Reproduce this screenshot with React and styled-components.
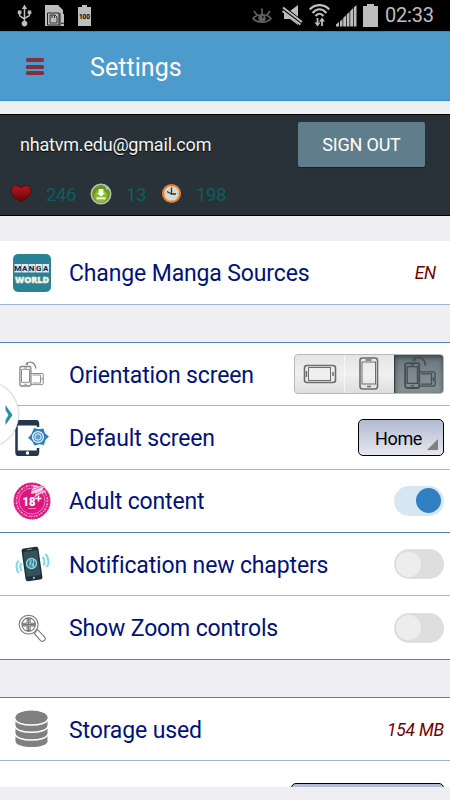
import { useState } from 'react';
import styled, { createGlobalStyle } from 'styled-components';

const GlobalStyle = createGlobalStyle`
  * {
    box-sizing: border-box;
  }

  body {
    margin: 0;
    background: #eeeef3;
    font-family: Roboto, sans-serif;
    overflow: hidden;
  }

  svg {
    display: block;
    flex-shrink: 0;
  }
`;

const Screen = styled.div`
  position: relative;
  width: 450px;
  height: 800px;
  overflow: hidden;
  background: #eeeef3;
`;

const StatusBar = styled.div`
  display: flex;
  align-items: center;
  justify-content: space-between;
  height: 31px;
  padding: 0 15px 0 17px;
  background: #000;
`;

const StatusGroup = styled.div`
  display: flex;
  align-items: center;
  gap: ${({ $gap }) => $gap}px;
`;

const Clock = styled.span`
  width: 51px;
  padding-left: 1px;
  font-size: 20px;
  line-height: 31px;
  letter-spacing: -0.2px;
  color: #bdbdbd;
  white-space: nowrap;
`;

const Header = styled.header`
  display: flex;
  align-items: center;
  height: 70px;
  padding-left: 26px;
  background: #4d9acd;
  border-top: 1px solid #3c87b8;
  border-bottom: 1px solid #2f92cd;
`;

const MenuButton = styled.button`
  display: flex;
  flex-direction: column;
  gap: 2.5px;
  width: 18px;
  padding: 1px 0 0;
  border: none;
  background: none;

  span {
    height: 4px;
    border-radius: 1.5px;
    background: #80313d;
  }
`;

const HeaderTitle = styled.h1`
  margin: 2px 0 0 46px;
  font-size: 25px;
  font-weight: 400;
  letter-spacing: 0.05px;
  color: #fff;
`;

const Account = styled.section`
  height: 102px;
  margin-top: 13px;
  border-top: 1px solid #000;
  border-bottom: 1px solid #000;
  background: #283238;
`;

const AccountTop = styled.div`
  display: flex;
  justify-content: space-between;
  align-items: center;
  height: 58px;
  padding: 0 25px 0 20px;
`;

const Email = styled.span`
  padding-top: 1px;
  font-size: 18px;
  letter-spacing: -0.2px;
  color: #f4f4f4;
  text-shadow: 0 1px 1px #000;
`;

const SignOutButton = styled.button`
  width: 127px;
  height: 45px;
  padding: 1px 0 0;
  border: none;
  border-radius: 2px;
  background: #607d8b;
  box-shadow: 0 1px 1px rgba(0, 0, 0, 0.4);
  font-family: inherit;
  font-size: 18px;
  letter-spacing: -0.2px;
  color: #fff;
`;

const Stats = styled.div`
  display: flex;
  align-items: center;
  height: 42px;
  padding: 0 0 1px 10px;
`;

const StatValue = styled.span`
  width: ${({ $width }) => $width}px;
  padding: 3px 0 0 14px;
  font-size: 18.5px;
  letter-spacing: -0.4px;
  color: #0b5f60;
`;

const Group = styled.section`
  margin-top: ${({ $gap }) => $gap}px;
  height: ${({ $height }) => $height}px;
  overflow: hidden;
  border-top: ${({ $topLine }) => ($topLine ? '1px solid #4b86ba' : 'none')};
  background: #fff;
`;

const Row = styled.div`
  display: flex;
  align-items: center;
  height: ${({ $height }) => $height || 63.35}px;
  padding-right: 6px;
  border-bottom: 1px solid ${({ $soft }) => ($soft ? '#9db5da' : '#4b86ba')};
`;

const IconCell = styled.div`
  display: flex;
  justify-content: center;
  width: 63px;
  flex-shrink: 0;
`;

const Label = styled.span`
  flex: 1;
  padding: 2px 0 0 6px;
  font-size: 23px;
  letter-spacing: -0.14px;
  color: #00137a;
  white-space: nowrap;
`;

const Value = styled.span`
  margin-right: ${({ $inset }) => $inset || 0}px;
  padding-top: 1px;
  font-size: 17.5px;
  font-style: italic;
  letter-spacing: -0.2px;
  color: #750000;
`;

const Segments = styled.div`
  display: flex;
  width: 150px;
  height: 40px;
  border: 1px solid #b9b9b9;
  border-radius: 4px;
  overflow: hidden;
  background: linear-gradient(#e4e4e4, #f0f0f0 50%, #dedede);
`;

const Segment = styled.button`
  display: flex;
  align-items: center;
  justify-content: center;
  width: 50px;
  padding: ${({ $active }) => ($active ? '0 0 3px 3px' : '0')};
  border: none;
  border-left: 1px solid ${({ $active }) => ($active ? '#313a3d' : 'rgba(255, 255, 255, 0.6)')};
  background: ${({ $active }) => ($active ? 'linear-gradient(#65737a, #7c888d 50%, #879195)' : 'none')};
  box-shadow: ${({ $active }) => ($active ? 'inset 0 2px 5px rgba(0, 0, 0, 0.45)' : 'none')};

  &:first-child {
    border-left: none;
  }
`;

const SelectBox = styled.button`
  position: relative;
  width: ${({ $width }) => $width}px;
  height: 37px;
  padding: 1px 5px 0 0;
  border: 1.5px solid #000;
  border-radius: 5px;
  background: linear-gradient(#b2bad1, #e6e8ef);
  font-family: inherit;
  font-size: 18px;
  letter-spacing: -0.3px;
  color: #000;

  &::after {
    content: '';
    position: absolute;
    right: 5px;
    bottom: 5px;
    border-left: 11px solid transparent;
    border-bottom: 11px solid #808080;
  }
`;

const PartialRow = styled.div`
  display: flex;
  justify-content: flex-end;
  padding: 22px 6px 0;
`;

const Track = styled.button`
  display: flex;
  align-items: center;
  justify-content: ${({ $on }) => ($on ? 'flex-end' : 'flex-start')};
  width: 50px;
  height: 30px;
  padding: 0 3px 0 2px;
  border: none;
  border-radius: 15px;
  background: ${({ $on }) => ($on ? '#d7e6f3' : '#dedede')};
`;

const Thumb = styled.span`
  width: 25px;
  height: 25px;
  border-radius: 50%;
  background: ${({ $on }) => ($on ? '#307fc3' : '#ededed')};
`;

const DrawerHandle = styled.button`
  position: absolute;
  left: -47px;
  top: 381px;
  display: flex;
  align-items: center;
  justify-content: flex-end;
  width: 66px;
  height: 67px;
  padding: 0 5px 0 0;
  border: 1px solid #dfdfdf;
  border-radius: 50%;
  background: #fff;
  box-shadow: 0 0 2px rgba(0, 0, 0, 0.15);
`;

const UsbIcon = () => (
  <svg width="15" height="23" viewBox="0 0 15 23" fill="none" stroke="#bdbdbd" strokeWidth="1.5">
    <path d="M7.5 3v16M2.5 8v3c0 2.5 5 2 5 5M12.5 8v3c0 2-5 2-5 4" />
    <path d="M7.5 0.5l2.6 4.5H4.9zM.8 6.5h3.6V10H.8zM10.7 6.5h3.6V10h-3.6z" fill="#bdbdbd" stroke="none" />
    <circle cx="7.5" cy="19.6" r="2.8" fill="#bdbdbd" stroke="none" />
  </svg>
);

const SdCardIcon = () => (
  <svg width="20" height="22" viewBox="0 0 20 22">
    <path d="M0 0h13l5 5v4h1v12H0z" fill="#bdbdbd" />
    <path d="M2.5 8h11.500v12H2.500z" fill="none" stroke="#222" strokeWidth="1" />
    <path d="M5 10h5l2 2v6H5z" fill="none" stroke="#333" strokeWidth="1" />
    <path d="M7 10v3M9.500 10v3" stroke="#333" fill="none" />
    <path d="M15 8v13" stroke="#222" />
    <path d="M16 18.3h3" stroke="#222" strokeWidth="1" />
  </svg>
);

const BatteryFull = () => (
  <svg width="13" height="21" viewBox="0 0 13 21">
    <path d="M4 0h5v2h4v19H0V2h4z" fill="#bdbdbd" />
    <text x="6.5" y="13.5" fontSize="6.5" fontWeight="700" fontFamily="Roboto, sans-serif" textAnchor="middle" fill="#000">100</text>
  </svg>
);

const EyeIcon = () => (
  <svg width="24" height="16" viewBox="0 0 24 16" fill="none" stroke="#606060" strokeWidth="1.7">
    <path d="M1 10.5C5 5.5 15 5.5 19 10.5 15 15.5 5 15.5 1 10.5z" />
    <path d="M10 .5V6M2 3l3 4M18 3l-3 4" />
    <circle cx="10" cy="10.2" r="3.7" fill="#606060" stroke="none" />
    <circle cx="10.8" cy="9" r="1" fill="#111" stroke="none" />
  </svg>
);

const MuteIcon = () => (
  <svg width="21" height="21" viewBox="0 0 21 21">
    <path d="M2 6h6l8-6v20l-8-6H2z" fill="#bdbdbd" />
    <path d="M1 3.500l18.500 14.500" stroke="#000" strokeWidth="5.500" />
    <path d="M1 2.500l19 14.500M.5 6l18 13.500" stroke="#bdbdbd" strokeWidth="2" />
  </svg>
);

const WifiIcon = () => (
  <svg width="21" height="23" viewBox="0 0 21 23" fill="none" stroke="#bdbdbd" strokeWidth="2.2">
    <path d="M.7 5.500C6-.4 15-.4 20.300 5.500M3.600 9C8 4 13 4 17.400 9M6.500 12C9 9 12 9 14.500 12" />
    <path d="M8.500 14v6M13 22v-6" strokeWidth="1.800" />
    <path d="M5.500 18.500h6l-3 4zM10 17.500h6l-3-4z" fill="#bdbdbd" stroke="none" />
  </svg>
);

const SignalIcon = () => (
  <svg width="21" height="22" viewBox="0 0 21 22" fill="#bdbdbd">
    <path d="M0 21.500V19.500l3-2.500v4.500zM4 21.500V16.500l2.500-2.500v7.500zM7.200 21.500V13L10 10.300v11.200zM10.700 21.500V9.500l2.800-2.800v14.800zM14.200 21.500V6L17 3.200v18.300zM17.700 21.500V2.600L20.500 0v21.500z" />
  </svg>
);

const BatteryIcon = () => (
  <svg width="15" height="23" viewBox="0 0 15 23" fill="#bdbdbd">
    <path d="M4 0h7v2h4v21H0V2h4z" />
  </svg>
);

const HeartIcon = () => (
  <svg width="22" height="20" viewBox="0 0 22 20">
    <defs>
      <linearGradient id="heart" x2="0" y2="1">
        <stop offset="0" stopColor="#b21820" />
        <stop offset="1" stopColor="#690004" />
      </linearGradient>
    </defs>
    <path d="M11 4C9 .5 1 .5 1 7c0 5 6 8 10 11 4-3 10-6 10-11C21 .5 13 .5 11 4z" fill="url(#heart)" stroke="#4f0509" strokeWidth="0.8" />
  </svg>
);

const DownloadBadge = () => (
  <svg width="22" height="22" viewBox="0 0 22 22">
    <circle cx="11" cy="11" r="9.700" fill="#67991b" stroke="#b7bdb3" strokeWidth="1.600" />
    <circle cx="11" cy="13" r="6.500" fill="#8bbe2c" />
    <path d="M12 1.200c4 0 8.500 3.800 8.700 8.500-1-2.500-2.500-3.500-4.700-3.500 0-2.500-1.500-4-4-5z" fill="#b7bdb3" />
    <path d="M8.700 6h4.600v4H15L11 13.800 7 10h1.700zM6.500 14.500h9v1.700h-9z" fill="#fff" />
  </svg>
);

const ClockBadge = () => (
  <svg width="21" height="21" viewBox="0 0 21 21">
    <circle cx="10.500" cy="10.500" r="8.500" fill="#d9d9d3" stroke="#ee7c22" strokeWidth="2.100" />
    <path d="M10.500 4.500v6.500H15M10.500 11L6 8.500" fill="none" stroke="#333" strokeWidth="1.300" />
    <path d="M10.500 3v1M10.500 17v1M3.500 10.500h1M16.500 10.500h1" stroke="#999" />
  </svg>
);

const LOGO_LETTERS = [
  ['M', '#d7e7f3'],
  ['A', '#f4dfe2'],
  ['N', '#d7e2f1'],
  ['G', '#f3e8ee'],
  ['A', '#dce9f2'],
];

const MangaLogo = () => (
  <svg width="38" height="38" viewBox="0 0 38 38">
    <rect width="38" height="38" rx="5" fill="#2a8296" />
    {LOGO_LETTERS.map(([letter, fill], i) => (
      <g key={i}>
        <rect x={1.500 + i * 7} y="10" width="6.500" height="8.500" fill={fill} />
        <text x={4.700 + i * 7} y="17.200" fontSize="8" fontWeight="700" fontFamily="Roboto, sans-serif" textAnchor="middle" fill="#17202c">{letter}</text>
      </g>
    ))}
    <text x="19" y="28.700" fontSize="9.500" fontWeight="800" fontFamily="'Open Sans', sans-serif" textAnchor="middle" textLength="34" lengthAdjust="spacingAndGlyphs" fill="#f4f1df" stroke="#f4f1df" strokeWidth="0.500">WORLD</text>
  </svg>
);

const PhonePortrait = () => (
  <svg width="20" height="34" viewBox="0 0 20 34" fill="none" stroke="#6c6c6c">
    <rect x="1" y="1" width="17.500" height="31" rx="2.500" strokeWidth="1.600" />
    <rect x="3" y="5" width="13.500" height="22" strokeWidth="1" />
    <path d="M6.500 3h6M8 29.500h4" strokeWidth="1.500" />
  </svg>
);

const PhoneLandscape = () => (
  <svg width="34" height="20" viewBox="0 0 34 20" fill="none" stroke="#6c6c6c">
    <rect x="1.500" y="1.500" width="31" height="17" rx="2.500" strokeWidth="1.600" />
    <rect x="5.500" y="3.500" width="22" height="13" strokeWidth="1" />
    <path d="M3.500 7v6M30 8v4" strokeWidth="1.500" />
  </svg>
);

const RotateIcon = ({ width = 25, color = '#858585', weight = 1.3 }) => (
  <svg width={width} height={width * 1.040} viewBox="0 0 25 26" fill="none" stroke={color} strokeWidth={weight}>
    <rect x="0.900" y="5.500" width="11" height="19.500" rx="1.500" />
    <path d="M2.500 8.300h8v13h-8zM5 7h3M5.300 23.300h2.500M12 12.500h11c.8 0 1.300.5 1.300 1.300v8.500c0 .8-.5 1.300-1.300 1.300H12M13.500 14h8v8h-8M23 16.500v3" strokeWidth={weight * 0.700} />
    <path d="M7.500 2.700C11-.6 16.300 1.500 16.800 7.500" />
    <path d="M6 3.300L9 .8v3.500z" fill={color} stroke="none" />
  </svg>
);

const TabletGearIcon = () => (
  <svg width="34" height="36" viewBox="0 0 34 36">
    <path d="M23 7V3.500C23 2 22 1 20.500 1H4C2.500 1 1.500 2 1.500 3.500v29C1.500 34 2.500 35 4 35h16.500c1.500 0 2.500-1 2.500-2.500V28" fill="none" stroke="#24384d" strokeWidth="2.500" />
    <path d="M2 1h21v4.500H2zM2 30.500h21V35H2z" fill="#24384d" />
    <circle cx="12.500" cy="33" r="1.700" fill="#fff" />
    <path d="M19 8l4.600 1.300 4.800-.8 1.400 4.500 4 3.600-3.400 3.500-1.400 4.800-4.800-.7-4.700 1.400-2.300-4.400-4.200-3.200 3.300-3.800z" fill="#2a80c4" />
    <circle cx="23" cy="17" r="5.400" fill="#3f8fce" stroke="#fff" strokeWidth="1.200" />
    <circle cx="23" cy="17" r="3.200" fill="#5a9fd6" stroke="#fff" strokeWidth="0.900" />
  </svg>
);

const AdultIcon = () => (
  <svg width="38" height="38" viewBox="0 0 38 38">
    <circle cx="19" cy="19" r="18" fill="#df147e" stroke="#df147e" strokeDasharray="3 .6" />
    <circle cx="19" cy="19" r="15.500" fill="none" stroke="#fff" strokeWidth="1.700" strokeDasharray="1.200 1.300 2 .8" opacity="0.600" />
    <circle cx="19" cy="19" r="13" fill="none" stroke="#f7b5d4" strokeWidth="0.700" />
    <path d="M19 7l14-5-4 6 5 1-9 4-4 3 2-5-5 1zM19 3l6 1-4 2z" fill="#fff" opacity="0.820" />
    <path d="M18 9l13-5M22 12l10-4" stroke="#ed63a8" />
    <text x="16" y="23.700" fontSize="13.500" fontWeight="900" fontFamily="Roboto, sans-serif" textAnchor="middle" textLength="13" lengthAdjust="spacingAndGlyphs" fill="#fff">18</text>
    <path d="M25.500 13.500v6M22.500 16.500h6" stroke="#fff" strokeWidth="1.500" />
    <path d="M15 26.500h8" stroke="#f285b8" />
  </svg>
);

const NotifyIcon = () => (
  <svg width="36" height="36" viewBox="0 0 36 36" fill="none">
    <g stroke="#79d9ec" strokeWidth="2">
      <path d="M7.500 17q-2.500 4 0 8M4.500 14.500q-4 5.500 0 12.500M28.500 11q3.500 4 1 8.500M31.500 8q5 6 1.500 13" />
    </g>
    <g transform="rotate(-8 18 18)">
      <rect x="9.500" y="1.500" width="17" height="33" rx="2.500" fill="#1e3138" />
      <rect x="11" y="5" width="14" height="25" fill="#36525b" />
      <path d="M15 3.300h5" stroke="#789" />
      <circle cx="18" cy="32" r="1" fill="#8de5f6" />
    </g>
    <circle cx="17.500" cy="17.500" r="5" stroke="#80dff0" strokeWidth="1.300" fill="#3d7786" />
    <path d="M16 14v7M18 14l-2 4h3l-1 3M19.500 14v7" stroke="#98e8f4" strokeWidth="0.800" />
  </svg>
);

const ZoomIcon = () => (
  <svg width="28" height="28" viewBox="0 0 29 29" fill="none" stroke="#747474" strokeWidth="1.100">
    <circle cx="11" cy="11" r="9.800" />
    <circle cx="11" cy="11" r="7" />
    <path d="M9.500 5h3v4.500H17v3h-4.500V17h-3v-4.500H5v-3h4.500zM11 5v12M5 11h12" />
    <path d="M18.500 18l1.800-1.700 7 7.200c2.500 3-1 6-3.700 4.300l-6.600-7.500z" />
  </svg>
);

const StorageIcon = () => (
  <svg width="33" height="38" viewBox="0 0 34 39">
    <path d="M.5 8v24c0 8 33 8 33 0V8z" fill="#808080" />
    <ellipse cx="17" cy="7.500" rx="16.500" ry="7" fill="#808080" />
    <path d="M0 9c1 8.500 33 8.500 34 0M0 16.500c1 8.500 33 8.500 34 0M0 24.500c1 8.500 33 8.500 34 0" fill="none" stroke="#fff" strokeWidth="1.700" />
  </svg>
);

function Toggle({ label, defaultOn = false }) {
  const [on, setOn] = useState(defaultOn);
  return (
    <Track role="switch" aria-checked={on} aria-label={label} $on={on} onClick={() => setOn(!on)}>
      <Thumb $on={on} />
    </Track>
  );
}

function SettingRow({ icon, label, soft, height, children }) {
  return (
    <Row $soft={soft} $height={height}>
      <IconCell>{icon}</IconCell>
      <Label>{label}</Label>
      {children}
    </Row>
  );
}

function App() {
  return (
    <Screen>
      <GlobalStyle />
      <StatusBar>
        <StatusGroup $gap={13}>
          <UsbIcon />
          <SdCardIcon />
          <BatteryFull />
        </StatusGroup>
        <StatusGroup $gap={6}>
          <EyeIcon />
          <MuteIcon />
          <WifiIcon />
          <SignalIcon />
          <BatteryIcon />
          <Clock>02:33</Clock>
        </StatusGroup>
      </StatusBar>

      <Header>
        <MenuButton aria-label="Menu">
          <span />
          <span />
          <span />
        </MenuButton>
        <HeaderTitle>Settings</HeaderTitle>
      </Header>

      <Account>
        <AccountTop>
          <Email>nhatvm.edu@gmail.com</Email>
          <SignOutButton>SIGN OUT</SignOutButton>
        </AccountTop>
        <Stats>
          <HeartIcon />
          <StatValue $width={58}>246</StatValue>
          <DownloadBadge />
          <StatValue $width={49}>13</StatValue>
          <ClockBadge />
          <StatValue $width={60}>198</StatValue>
        </Stats>
      </Account>

      <Group $gap={25} $height={64}>
        <SettingRow icon={<MangaLogo />} label="Change Manga Sources" height={64} soft>
          <Value $inset={8}>EN</Value>
        </SettingRow>
      </Group>

      <Group $gap={37} $height={318} $topLine>
        <SettingRow icon={<RotateIcon />} label="Orientation screen" soft>
          <Segments>
            <Segment aria-label="Landscape"><PhoneLandscape /></Segment>
            <Segment aria-label="Portrait"><PhonePortrait /></Segment>
            <Segment aria-label="Auto rotate" $active>
              <RotateIcon width={32} color="#444d50" weight={1.400} />
            </Segment>
          </Segments>
        </SettingRow>
        <SettingRow icon={<TabletGearIcon />} label="Default screen" soft>
          <SelectBox $width={86}>Home</SelectBox>
        </SettingRow>
        <SettingRow icon={<AdultIcon />} label="Adult content">
          <Toggle label="Adult content" defaultOn />
        </SettingRow>
        <SettingRow icon={<NotifyIcon />} label="Notification new chapters" soft>
          <Toggle label="Notification new chapters" />
        </SettingRow>
        <SettingRow icon={<ZoomIcon />} label="Show Zoom controls">
          <Toggle label="Show Zoom controls" />
        </SettingRow>
      </Group>

      <Group $gap={37} $height={90} $topLine>
        <SettingRow icon={<StorageIcon />} label="Storage used" soft>
          <Value>154 MB</Value>
        </SettingRow>
        <PartialRow>
          <SelectBox $width={153} />
        </PartialRow>
      </Group>

      <DrawerHandle aria-label="Open drawer">
        <svg width="8" height="20" viewBox="0 0 8 20">
          <path d="M.5 0L7.500 10 .5 20v-5L3.500 10 .5 5z" fill="#2b8da6" />
        </svg>
      </DrawerHandle>
    </Screen>
  );
}

export default App;
